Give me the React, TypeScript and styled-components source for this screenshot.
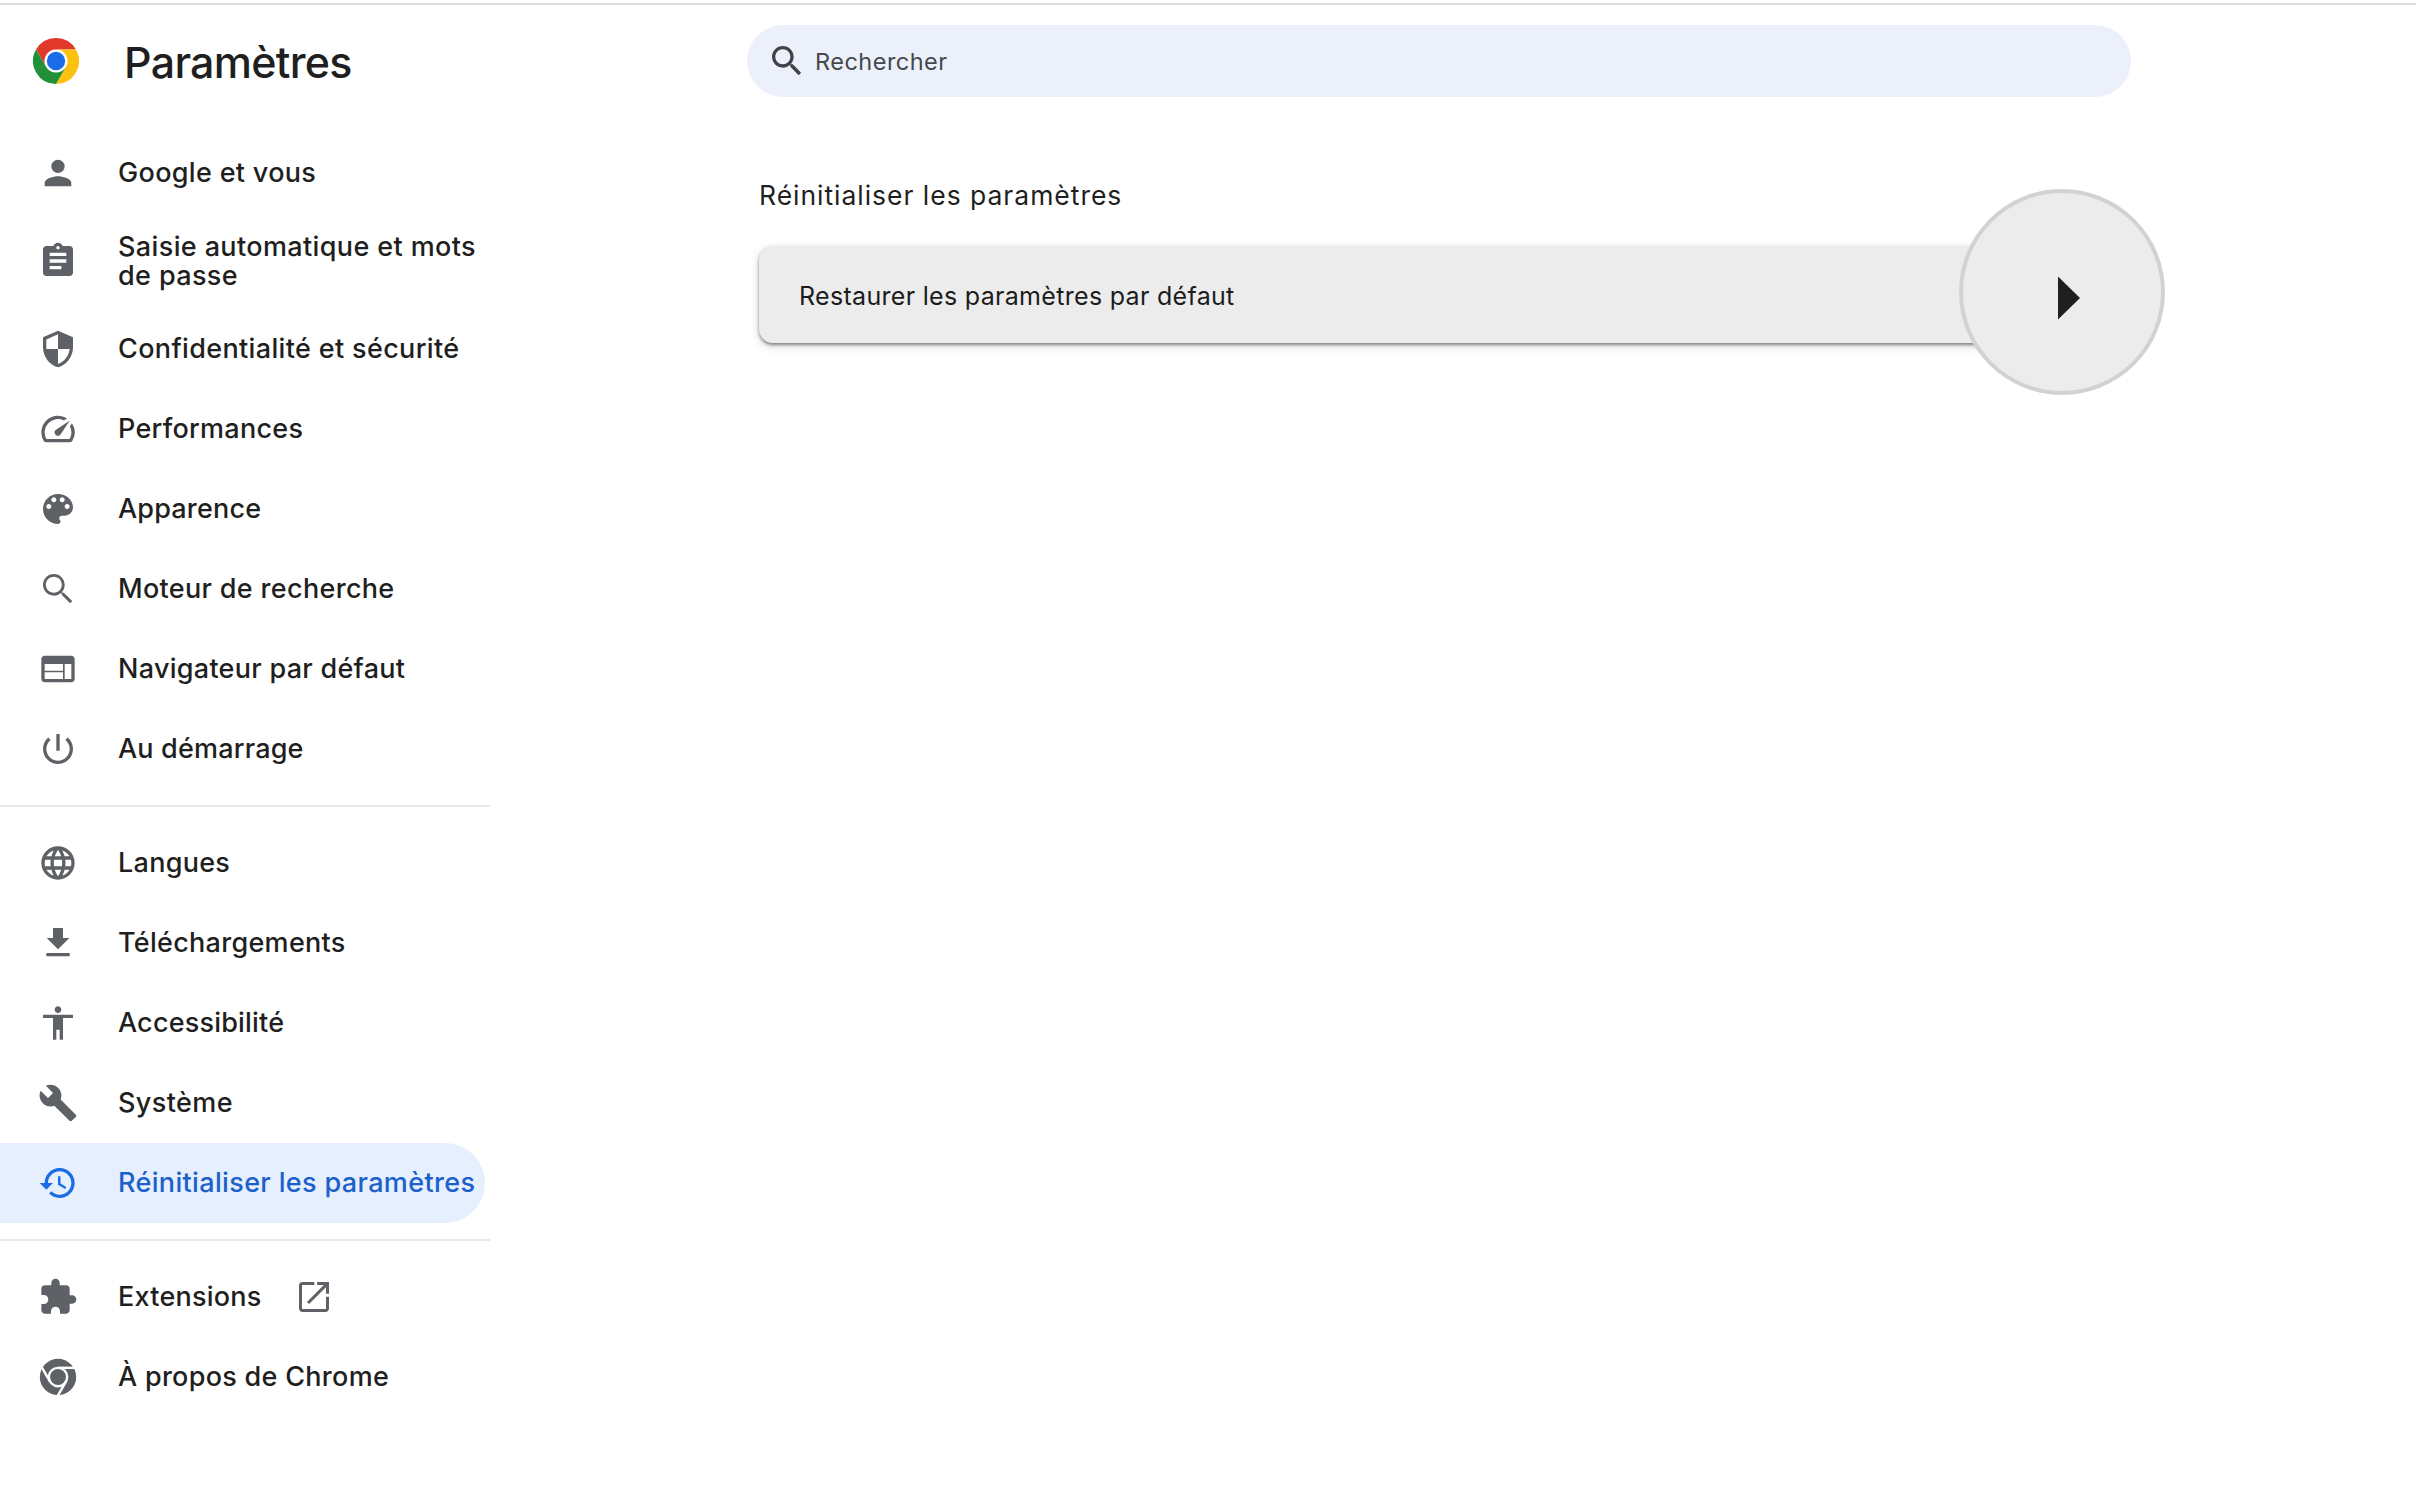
import React from 'react';
import styled, { createGlobalStyle } from 'styled-components';

const GlobalStyle = createGlobalStyle`
  *, *::before, *::after { box-sizing: border-box; }
  body {
    margin: 0;
    background: #fff;
    color: #1f1f21;
    font-family: Inter, "Liberation Sans", sans-serif;
  }
`;

const Page = styled.div`
  display: flex;
  height: 1485px;
  padding-top: 3px;
  overflow: hidden;
`;

const Frame = styled.div`
  flex: 1;
  display: flex;
  border-top: 2px solid #dedede;
`;

const Sidebar = styled.aside`
  width: 490px;
  flex: none;
`;

const Brand = styled.header`
  display: flex;
  align-items: center;
  height: 114px;
  padding: 0 0 2px 33px;
  gap: 45px;
  margin-bottom: 14px;
`;

const Logo = styled.svg`
  width: 46px;
  height: 46px;
  display: block;
  flex: none;
`;

const Title = styled.h1`
  margin: 0;
  padding-top: 1px;
  font-size: 43px;
  font-weight: 500;
  line-height: 52px;
  letter-spacing: -0.72px;
`;

const NavItem = styled.a<{ $active?: boolean; $tall?: boolean }>`
  display: flex;
  align-items: center;
  gap: 40px;
  height: ${(p) => (p.$tall ? 96 : 80)}px;
  width: 485px;
  padding-left: 38px;
  border-radius: 0 40px 40px 0;
  background: ${(p) => (p.$active ? '#e5effd' : 'transparent')};
  color: ${(p) => (p.$active ? '#1c60ca' : '#1f1f21')};
  fill: ${(p) => (p.$active ? '#1a6de4' : '#5e6266')};
`;

const Label = styled.span<{ $track: number }>`
  padding-top: 1px;
  font-size: 27px;
  font-weight: 500;
  line-height: 28.4px;
  letter-spacing: ${(p) => p.$track}px;
  white-space: pre-line;
`;

const Glyph = styled.svg`
  width: 40px;
  height: 40px;
  display: block;
  flex: none;
`;

const Trailing = styled.span`
  display: flex;
  margin-left: -8px;
`;

const Divider = styled.hr`
  height: 2px;
  margin: 16px 0;
  border: 0;
  background: #e9e9e9;
`;

const Main = styled.main`
  width: 1384px;
  margin-left: 257px;
  padding-top: 20px;
`;

const SearchBar = styled.div`
  display: flex;
  align-items: center;
  gap: 8px;
  height: 72px;
  padding-left: 20px;
  border-radius: 36px;
  background: #ecf0fa;
  color: #45484d;
  fill: #404447;
  font-size: 23.5px;
  letter-spacing: 0.48px;
`;

const SectionTitle = styled.h2`
  margin: 82px 0 34px 12px;
  font-size: 26.5px;
  font-weight: 400;
  line-height: 33px;
  letter-spacing: 0.97px;
`;

const Card = styled.button`
  position: relative;
  display: flex;
  align-items: center;
  width: 1332px;
  height: 97px;
  margin-left: 12px;
  padding: 3px 0 0 40px;
  border: 0;
  border-radius: 14px;
  background: #ececec;
  box-shadow: 0 2px 3px rgba(0, 0, 0, 0.4), 0 3px 10px rgba(0, 0, 0, 0.17);
  color: #1c1c1c;
  font: 400 25px Inter, "Liberation Sans", sans-serif;
  letter-spacing: 0.31px;
  text-align: left;
`;

const Lens = styled.span`
  position: absolute;
  left: 1200px;
  top: -57px;
  width: 206px;
  height: 206px;
  border: 4px solid #d2d2d2;
  border-radius: 50%;
  background: #ececec;
`;

const Arrow = styled.svg`
  position: absolute;
  left: 94px;
  top: 82px;
  width: 24px;
  height: 46px;
`;

const PERSON = 'M12 12c2.21 0 4-1.79 4-4s-1.79-4-4-4-4 1.79-4 4 1.79 4 4 4zm0 2c-2.67 0-8 1.34-8 4v2h16v-2c0-2.66-5.33-4-8-4z';
const ASSIGNMENT = 'M19 3h-4.18C14.4 1.84 13.3 1 12 1c-1.3 0-2.4.84-2.82 2H5c-1.1 0-2 .9-2 2v14c0 1.1.9 2 2 2h14c1.1 0 2-.9 2-2V5c0-1.1-.9-2-2-2zm-7 0c.55 0 1 .45 1 1s-.45 1-1 1-1-.45-1-1 .45-1 1-1zm2 14H7v-2h7v2zm3-4H7v-2h10v2zm0-4H7V7h10v2z';
const SHIELD = 'M12 1L3 5v6c0 5.55 3.84 10.74 9 12 5.16-1.26 9-6.45 9-12V5l-9-4zm0 10.99h7c-.53 4.12-3.28 7.79-7 8.94V12H5V6.3l7-3.11v8.8z';
const SPEED = 'M20.38 8.57l-1.23 1.85a8 8 0 0 1-.22 7.58H5.07A8 8 0 0 1 15.58 6.85l1.85-1.23A10 10 0 0 0 3.35 19a2 2 0 0 0 1.72 1h13.85a2 2 0 0 0 1.74-1 10 10 0 0 0-.27-10.44zm-9.79 6.84a2 2 0 0 0 2.83 0l5.66-8.49-8.49 5.66a2 2 0 0 0 0 2.83z';
const PALETTE = 'M12 3c-4.97 0-9 4.03-9 9s4.03 9 9 9c.83 0 1.5-.67 1.5-1.5 0-.39-.15-.74-.39-1.01-.23-.26-.38-.61-.38-.99 0-.83.67-1.5 1.5-1.5H16c2.76 0 5-2.24 5-5 0-4.42-4.03-8-9-8zm-5.5 9c-.83 0-1.5-.67-1.5-1.5S5.67 9 6.5 9 8 9.67 8 10.5 7.33 12 6.5 12zm3-4C8.67 8 8 7.33 8 6.5S8.67 5 9.5 5s1.5.67 1.5 1.5S10.33 8 9.5 8zm5 0c-.83 0-1.5-.67-1.5-1.5S13.67 5 14.5 5s1.5.67 1.5 1.5S15.33 8 14.5 8zm3 4c-.83 0-1.5-.67-1.5-1.5S16.67 9 17.5 9s1.5.67 1.5 1.5-.67 1.5-1.5 1.5z';
const SEARCH = 'M15.5 14h-.79l-.28-.27C15.41 12.59 16 11.11 16 9.5 16 5.91 13.09 3 9.5 3S3 5.91 3 9.5 5.91 16 9.5 16c1.61 0 3.09-.59 4.23-1.57l.27.28v.79l5 4.99L20.49 19l-4.99-5zm-6 0C7.01 14 5 11.99 5 9.5S7.01 5 9.5 5 14 7.01 14 9.5 11.99 14 9.5 14z';
const SEARCH_THIN = 'M15.5 14.2h-.75l-.35-.34C15.41 12.65 16 11.11 16 9.5 16 5.91 13.09 3 9.5 3S3 5.91 3 9.5 5.91 16 9.5 16c1.61 0 3.15-.59 4.36-1.6l.34.35v.75l5.05 5.05 1.3-1.3-5.05-5.05zm-6 .1c-2.65 0-4.8-2.15-4.8-4.8s2.15-4.8 4.8-4.8 4.8 2.15 4.8 4.8-2.15 4.8-4.8 4.8z';
const WEB = 'M20 4H4c-1.1 0-1.99.9-1.99 2L2 18c0 1.1.9 2 2 2h16c1.1 0 2-.9 2-2V6c0-1.1-.9-2-2-2zm-5 14H4v-4h11v4zm0-5H4V9h11v4zm5 5h-4V9h4v9z';
const POWER = 'M13 3h-2v10h2V3zm4.83 2.17l-1.42 1.42C17.99 7.86 19 9.81 19 12c0 3.87-3.13 7-7 7s-7-3.13-7-7c0-2.19 1.01-4.14 2.58-5.42L6.17 5.17C4.23 6.82 3 9.26 3 12c0 4.97 4.03 9 9 9s9-4.03 9-9c0-2.74-1.23-5.18-3.17-6.83z';
const GLOBE = 'M11.99 2C6.47 2 2 6.48 2 12s4.47 10 9.99 10C17.52 22 22 17.52 22 12S17.52 2 11.99 2zm6.93 6h-2.95c-.32-1.25-.78-2.45-1.38-3.56 1.84.63 3.37 1.91 4.33 3.56zM12 4.04c.83 1.2 1.48 2.53 1.91 3.96h-3.82c.43-1.43 1.08-2.76 1.91-3.96zM4.26 14C4.1 13.36 4 12.69 4 12s.1-1.36.26-2h3.38c-.08.66-.14 1.32-.14 2s.06 1.34.14 2H4.26zm.82 2h2.95c.32 1.25.78 2.45 1.38 3.56-1.84-.63-3.37-1.9-4.33-3.56zm2.95-8H5.08c.96-1.66 2.49-2.93 4.33-3.56C8.81 5.55 8.35 6.75 8.03 8zM12 19.96c-.83-1.2-1.48-2.53-1.91-3.96h3.82c-.43 1.43-1.08 2.76-1.91 3.96zM14.34 14H9.66c-.09-.66-.16-1.32-.16-2s.07-1.35.16-2h4.68c.09.65.16 1.32.16 2s-.07 1.34-.16 2zm.25 5.56c.6-1.11 1.06-2.31 1.38-3.56h2.95c-.96 1.65-2.49 2.93-4.33 3.56zM16.36 14c.08-.66.14-1.32.14-2s-.06-1.34-.14-2h3.38c.16.64.26 1.31.26 2s-.1 1.36-.26 2h-3.38z';
const DOWNLOAD = 'M18.8 9H15V3H9v6H5.2l6.8 6.8L18.8 9zM5 18v2h14v-2H5z';
const ACCESSIBILITY = 'M12 2c1.1 0 2 .9 2 2s-.9 2-2 2-2-.9-2-2 .9-2 2-2zm9 7h-6v13h-2v-6h-2v6H9V9H3V7h18v2z';
const WRENCH = 'M22.7 19l-9.1-9.1c.9-2.3.4-5-1.5-6.9-2-2-5-2.4-7.4-1.3L9 6 6 9 1.6 4.7C.4 7.1.9 10.1 2.9 12.1c1.9 1.9 4.6 2.4 6.9 1.5l9.1 9.1c.4.4 1 .4 1.4 0l2.3-2.3c.5-.4.5-1.1.1-1.4z';
const RESTORE = 'M13 3c-4.97 0-9 4.03-9 9H1l3.89 3.89.07.14L9 12H6c0-3.87 3.13-7 7-7s7 3.13 7 7-3.13 7-7 7c-1.93 0-3.68-.79-4.94-2.06l-1.42 1.42C8.27 19.99 10.51 21 13 21c4.97 0 9-4.03 9-9s-4.03-9-9-9zm-1 5v5l4.28 2.54.72-1.21-3.5-2.08V8H12z';
const PUZZLE = 'M20.5 11H19V7c0-1.1-.9-2-2-2h-4V3.5C13 2.12 11.88 1 10.5 1S8 2.12 8 3.5V5H4c-1.1 0-1.99.9-1.99 2v3.8H3.5c1.49 0 2.7 1.21 2.7 2.7s-1.21 2.7-2.7 2.7H2V20c0 1.1.9 2 2 2h3.8v-1.5c0-1.49 1.21-2.7 2.7-2.7 1.49 0 2.7 1.21 2.7 2.7V22H17c1.1 0 2-.9 2-2v-4h1.5c1.38 0 2.5-1.12 2.5-2.5S21.88 11 20.5 11z';

const Icon = ({ d }: { d: string }) => (
  <Glyph viewBox="0 0 24 24">
    <path d={d} />
  </Glyph>
);

const ChromeMono = () => (
  <Glyph viewBox="0 0 24 24">
    <circle cx="12" cy="12" r="10.9" />
    <g fill="none" stroke="#fff" strokeWidth="1.45">
      <circle cx="12" cy="12" r="5.5" />
      {[0, 120, 240].map((angle) => (
        <path key={angle} d="M12 6.5H22.6" transform={`rotate(${angle} 12 12)`} />
      ))}
    </g>
  </Glyph>
);

const OpenInNew = () => (
  <Glyph viewBox="0 0 24 24">
    <g fill="none" stroke="#5e6266" strokeWidth="1.8">
      <path d="M12.2 3.9H5.1a1.2 1.2 0 0 0-1.2 1.2v13.8a1.2 1.2 0 0 0 1.2 1.2h13.8a1.2 1.2 0 0 0 1.2-1.2v-7.1" />
      <path d="M13.9 3.9h6.2v6.1M20 4L8.4 15.6" />
    </g>
  </Glyph>
);

const ChromeLogo = () => (
  <Logo viewBox="0 0 48 48">
    <circle cx="24" cy="24" r="12.5" fill="#fff" />
    <path fill="#e0382b" d="M24 12H44.78A23.99 23.99 0 0 0 3.22 12L13.61 30A11.985 11.985 0 0 1 24 12Z" />
    <path fill="#fcc20f" d="M34.39 30L24 48A23.99 23.99 0 0 0 44.78 12H24A11.985 11.985 0 0 1 34.39 30Z" />
    <path fill="#219139" d="M13.61 30L3.22 12A23.99 23.99 0 0 0 24 48L34.39 30A11.985 11.985 0 0 1 13.61 30Z" />
    <circle cx="24" cy="24" r="9.6" fill="#1b6ce8" />
  </Logo>
);

interface Entry {
  label: string;
  track: number;
  icon: React.ReactNode;
  tall?: boolean;
  active?: boolean;
  external?: boolean;
}

const groups: Entry[][] = [
  [
    { label: 'Google et vous', track: 0.32, icon: <Icon d={PERSON} /> },
    { label: 'Saisie automatique et mots\nde passe', track: 0.38, icon: <Icon d={ASSIGNMENT} />, tall: true },
    { label: 'Confidentialité et sécurité', track: 0.35, icon: <Icon d={SHIELD} /> },
    { label: 'Performances', track: 0.26, icon: <Icon d={SPEED} /> },
    { label: 'Apparence', track: 0.18, icon: <Icon d={PALETTE} /> },
    { label: 'Moteur de recherche', track: 0.32, icon: <Icon d={SEARCH_THIN} /> },
    { label: 'Navigateur par défaut', track: 0.28, icon: <Icon d={WEB} /> },
    { label: 'Au démarrage', track: 0.18, icon: <Icon d={POWER} /> },
  ],
  [
    { label: 'Langues', track: 0.27, icon: <Icon d={GLOBE} /> },
    { label: 'Téléchargements', track: 0.29, icon: <Icon d={DOWNLOAD} /> },
    { label: 'Accessibilité', track: 0.19, icon: <Icon d={ACCESSIBILITY} /> },
    { label: 'Système', track: 0.4, icon: <Icon d={WRENCH} /> },
    { label: 'Réinitialiser les paramètres', track: 0.35, icon: <Icon d={RESTORE} />, active: true },
  ],
  [
    { label: 'Extensions', track: 0.23, icon: <Icon d={PUZZLE} />, external: true },
    { label: 'À propos de Chrome', track: 0.29, icon: <ChromeMono /> },
  ],
];

export default function App() {
  return (
    <>
      <GlobalStyle />
      <Page>
        <Frame>
          <Sidebar>
            <Brand>
              <ChromeLogo />
              <Title>Paramètres</Title>
            </Brand>
            <nav>
              {groups.map((entries, index) => (
                <React.Fragment key={index}>
                  {index > 0 && <Divider />}
                  {entries.map((entry) => (
                    <NavItem key={entry.label} $active={entry.active} $tall={entry.tall}>
                      {entry.icon}
                      <Label $track={entry.track}>{entry.label}</Label>
                      {entry.external && (
                        <Trailing>
                          <OpenInNew />
                        </Trailing>
                      )}
                    </NavItem>
                  ))}
                </React.Fragment>
              ))}
            </nav>
          </Sidebar>
          <Main>
            <SearchBar>
              <Icon d={SEARCH} />
              <span>Rechercher</span>
            </SearchBar>
            <SectionTitle>Réinitialiser les paramètres</SectionTitle>
            <Card>
              Restaurer les paramètres par défaut
              <Lens>
                <Arrow viewBox="0 0 24 46">
                  <path d="M1 1.5L23 23L1 44.5Z" fill="#1f1f1f" />
                </Arrow>
              </Lens>
            </Card>
          </Main>
        </Frame>
      </Page>
    </>
  );
}
